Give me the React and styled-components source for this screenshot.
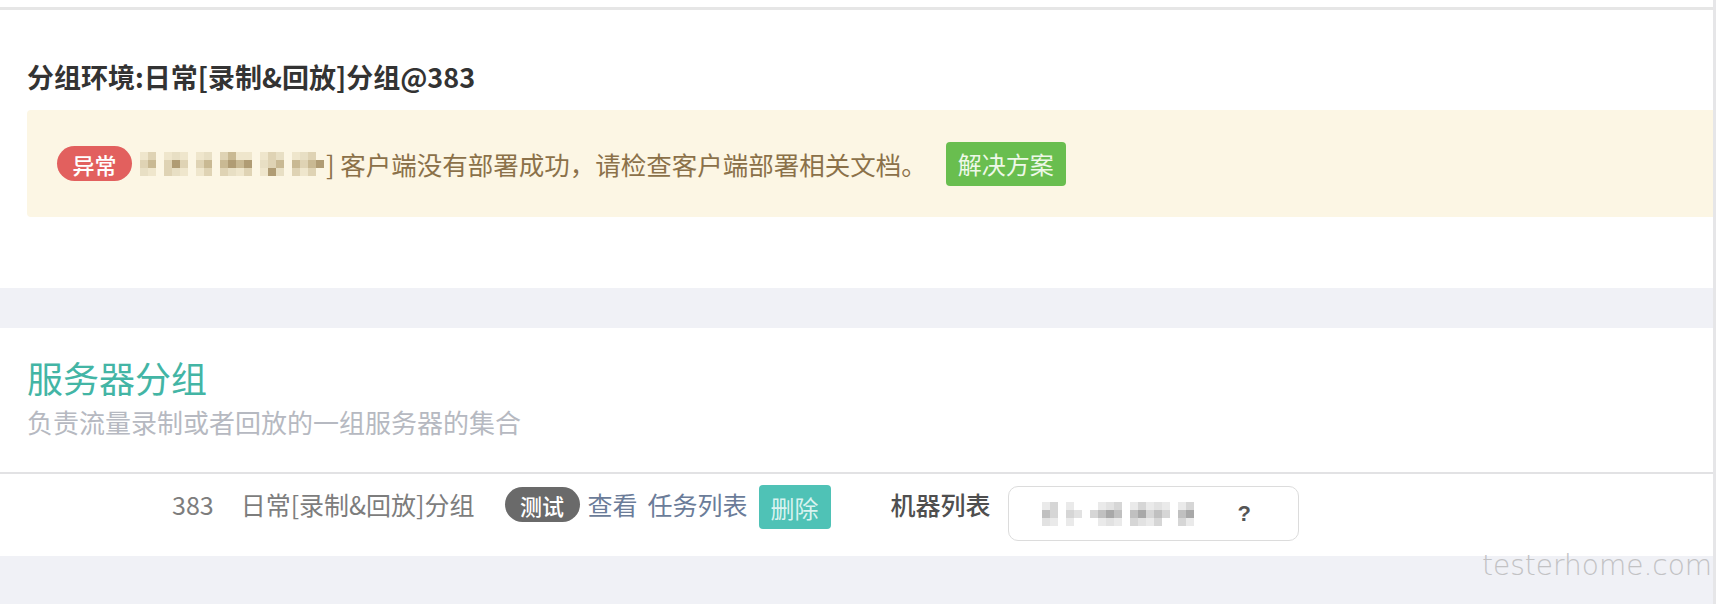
import React from 'react';
import styled, { createGlobalStyle } from 'styled-components';

const GlobalStyle = createGlobalStyle`
  html, body {
    margin: 0;
    padding: 0;
    background: #f0f1f6;
    font-family: "Noto Sans CJK SC", "Noto Sans", sans-serif;
  }
`;

const Page = styled.div`
  position: relative;
  width: 1713px;
  height: 604px;
  border-right: 3px solid #e6e6e8;
  overflow: hidden;
`;

const TopStrip = styled.div`
  height: 7px;
  background: #fff;
  border-bottom: 3px solid #e6e6e6;
`;

const EnvCard = styled.div`
  box-sizing: border-box;
  height: 278px;
  background: #fff;
  padding: 49px 0 0 27px;
`;

const EnvTitle = styled.h2`
  margin: 0;
  font-size: 27px;
  line-height: 36px;
  font-weight: 700;
  color: #333;
`;

const Alert = styled.div`
  display: flex;
  align-items: center;
  box-sizing: border-box;
  height: 107px;
  margin-top: 15px;
  padding-left: 30px;
  background: #fcf6e4;
  border-radius: 4px 0 0 4px;
  color: #8b7149;
  font-size: 25.5px;
`;

const Pill = styled.span`
  display: inline-flex;
  align-items: center;
  justify-content: center;
  flex: none;
  width: 75px;
  height: 35px;
  border-radius: 18px;
  background: ${(p) => p.$bg};
  color: #fff;
  font-size: 22px;
  font-weight: 500;
  line-height: 1;
  margin-right: 8px;
  margin-top: ${(p) => p.$top || 0}px;
`;

const AlertText = styled.span`
  white-space: nowrap;
  margin-left: 2px;
`;

const Button = styled.span`
  display: inline-flex;
  align-items: center;
  justify-content: center;
  flex: none;
  height: 44px;
  padding: 0 ${(p) => p.$pad}px;
  border-radius: 4px;
  background: ${(p) => p.$bg};
  color: ${(p) => p.$fg};
  font-size: 24px;
  margin-left: ${(p) => p.$left || 0}px;
  margin-right: ${(p) => p.$right || 0}px;
`;

const Gap = styled.div`
  height: 40px;
`;

const ServerCard = styled.div`
  box-sizing: border-box;
  height: 228px;
  background: #fff;
`;

const ServerHead = styled.div`
  padding: 27px 0 0 27px;
`;

const SectionTitle = styled.h3`
  margin: 0;
  font-size: 36px;
  line-height: 44px;
  font-weight: 400;
  color: #43b5a5;
`;

const SectionSub = styled.p`
  margin: 6px 0 0;
  font-size: 26px;
  line-height: 34px;
  color: #b6b9c1;
`;

const Divider = styled.div`
  margin-top: 33px;
  height: 2px;
  background: #e2e2e4;
`;

const Row = styled.div`
  display: flex;
  align-items: flex-start;
  padding: 11px 0 0 172px;
`;

const Cell = styled.span`
  flex: none;
  font-size: 25px;
  line-height: 34px;
  margin-top: 2px;
  color: ${(p) => p.$color || '#7d7d7d'};
  font-weight: ${(p) => p.$weight || 400};
  margin-right: ${(p) => p.$right || 0}px;
  white-space: nowrap;
`;

const HostBox = styled.div`
  display: flex;
  align-items: center;
  box-sizing: border-box;
  width: 291px;
  height: 55px;
  margin-top: 1px;
  padding-left: 33px;
  border: 1.5px solid #dcdcdc;
  border-radius: 10px;
`;

const Help = styled.span`
  margin-left: 36px;
  font-family: "Liberation Sans", sans-serif;
  font-size: 22px;
  font-weight: 700;
  color: #555;
`;

const Watermark = styled.div`
  position: absolute;
  left: 1482px;
  top: 549px;
  font-family: "DejaVu Sans", sans-serif;
  font-weight: 200;
  font-size: 28px;
  line-height: 33px;
  color: #c2c2c4;
  white-space: nowrap;
`;

// blurred (mosaic) text, drawn as little squares
function Mosaic({ rows, palette, cell = 8 }) {
  const w = rows[0].length * cell;
  const h = rows.length * cell;
  return (
    <svg width={w} height={h} style={{ flex: 'none', display: 'block' }}>
      {rows.map((r, y) =>
        r.split('').map((c, x) =>
          c === '.' ? null : (
            <rect key={`${x}-${y}`} x={x * cell} y={y * cell} width={cell} height={cell} fill={palette[c]} />
          )
        )
      )}
    </svg>
  );
}

const warmPalette = {
  a: '#efe6cc',
  b: '#dfd3b4',
  c: '#c9b993',
  d: '#b09c74',
  e: '#e8dfc4',
};

const greyPalette = {
  a: '#eaeaea',
  b: '#d6d6d6',
  c: '#c0c0c0',
  d: '#a8a8a8',
  e: '#e2e2e2',
};

const ipRows = [
  'ab.aea.ae.bcaa.abe.aeb.',
  'bc.bdb.bc.cdcd.ebc.cbcd',
  'ea.bea.ab.beab.ade.bab.',
];

const hostRows = [
  'ab.a...aeb.abaea.ab.',
  'cb.be.bcdc.cdbcb.cd.',
  'ea.a...aea.beab..ba.',
];

export default function App() {
  return (
    <Page>
      <GlobalStyle />
      <TopStrip />
      <EnvCard>
        <EnvTitle>分组环境:日常[录制&amp;回放]分组@383</EnvTitle>
        <Alert>
          <Pill $bg="#e2605e">异常</Pill>
          <Mosaic rows={ipRows} palette={warmPalette} />
          <AlertText>] 客户端没有部署成功，请检查客户端部署相关文档。</AlertText>
          <Button $bg="#69be4f" $fg="#eef8e8" $pad={12} $left={19}>
            解决方案
          </Button>
        </Alert>
      </EnvCard>
      <Gap />
      <ServerCard>
        <ServerHead>
          <SectionTitle>服务器分组</SectionTitle>
          <SectionSub>负责流量录制或者回放的一组服务器的集合</SectionSub>
        </ServerHead>
        <Divider />
        <Row>
          <Cell $right={27}>383</Cell>
          <Cell $right={30}>日常[录制&amp;回放]分组</Cell>
          <Pill $bg="#6a6a6a" $top={2}>测试</Pill>
          <Cell $color="#6b7c99" $right={10}>查看</Cell>
          <Cell $color="#6b7c99" $right={11}>任务列表</Cell>
          <Button $bg="#4fc2b6" $fg="#d9f3f0" $pad={12} $right={60}>
            删除
          </Button>
          <Cell $color="#4f4f4f" $weight={500} $right={17}>机器列表</Cell>
          <HostBox>
            <Mosaic rows={hostRows} palette={greyPalette} />
            <Help>?</Help>
          </HostBox>
        </Row>
      </ServerCard>
      <Watermark>testerhome.com</Watermark>
    </Page>
  );
}
